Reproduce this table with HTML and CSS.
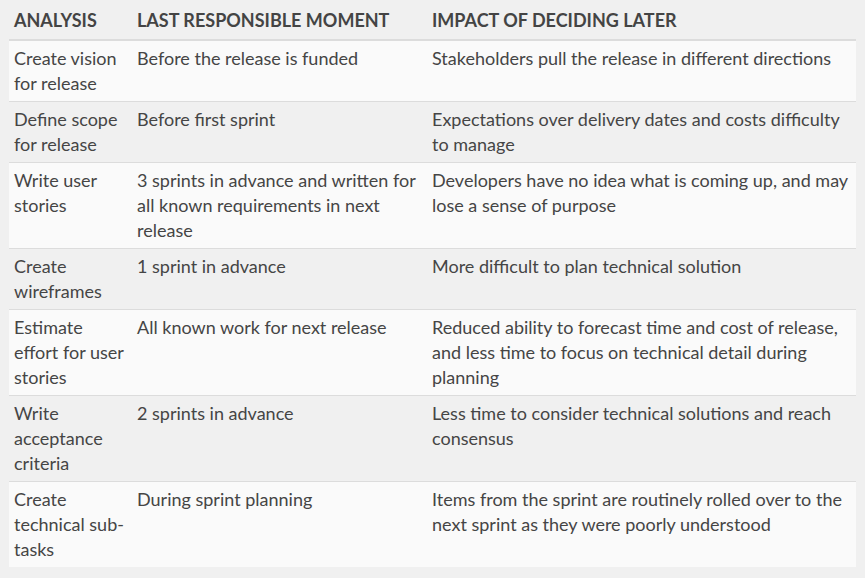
FILE: index.html
```html
<!DOCTYPE html>
<html lang="en">
<head>
<meta charset="utf-8">
<title>Last responsible moment</title>
<link rel="stylesheet" href="styles.css">
</head>
<body>
<table class="lrm">
  <colgroup>
    <col class="c1">
    <col class="c2">
    <col class="c3">
  </colgroup>
  <thead>
    <tr>
      <th>Analysis</th>
      <th>Last responsible moment</th>
      <th>Impact of deciding later</th>
    </tr>
  </thead>
  <tbody>
    <tr>
      <td>Create vision for release</td>
      <td>Before the release is funded</td>
      <td>Stakeholders pull the release in different directions</td>
    </tr>
    <tr>
      <td>Define scope for release</td>
      <td>Before first sprint</td>
      <td>Expectations over delivery dates and costs difficulty to manage</td>
    </tr>
    <tr>
      <td>Write user stories</td>
      <td>3 sprints in advance and written for all known requirements in next release</td>
      <td>Developers have no idea what is coming up, and may lose a sense of purpose</td>
    </tr>
    <tr>
      <td>Create wireframes</td>
      <td>1 sprint in advance</td>
      <td>More difficult to plan technical solution</td>
    </tr>
    <tr>
      <td>Estimate effort for user stories</td>
      <td>All known work for next release</td>
      <td>Reduced ability to forecast time and cost of release, and less time to focus on technical detail during planning</td>
    </tr>
    <tr>
      <td>Write acceptance criteria</td>
      <td>2 sprints in advance</td>
      <td>Less time to consider technical solutions and reach consensus</td>
    </tr>
    <tr>
      <td>Create technical sub-tasks</td>
      <td>During sprint planning</td>
      <td>Items from the sprint are routinely rolled over to the next sprint as they were poorly understood</td>
    </tr>
  </tbody>
</table>
</body>
</html>
```
FILE: styles.css
```css
html, body {
  margin: 0;
  padding: 0;
  background: #f0f0f0;
}

body {
  padding: 8px 9px;
  font-family: Lato, "Open Sans", "Liberation Sans", sans-serif;
  font-size: 18px;
  line-height: 25px;
  color: #454545;
}

.lrm {
  width: 847px;
  border-collapse: collapse;
  table-layout: fixed;
}

.c1 { width: 123px; }
.c2 { width: 295px; }
.c3 { width: 429px; }

.lrm th {
  text-align: left;
  font-weight: 700;
  text-transform: uppercase;
  padding: 0 5px 6px;
  border-bottom: 2px solid #dcdcdc;
  color: #444;
}

.lrm td {
  vertical-align: top;
  padding: 5px 5px;
  border-top: 1px solid #dcdcdc;
}

.lrm tbody tr:first-child td {
  border-top: none;
}

.lrm tbody tr:nth-child(odd) {
  background: #fafafa;
}

.lrm tbody tr:nth-child(even) {
  background: #f0f0f0;
}
```
